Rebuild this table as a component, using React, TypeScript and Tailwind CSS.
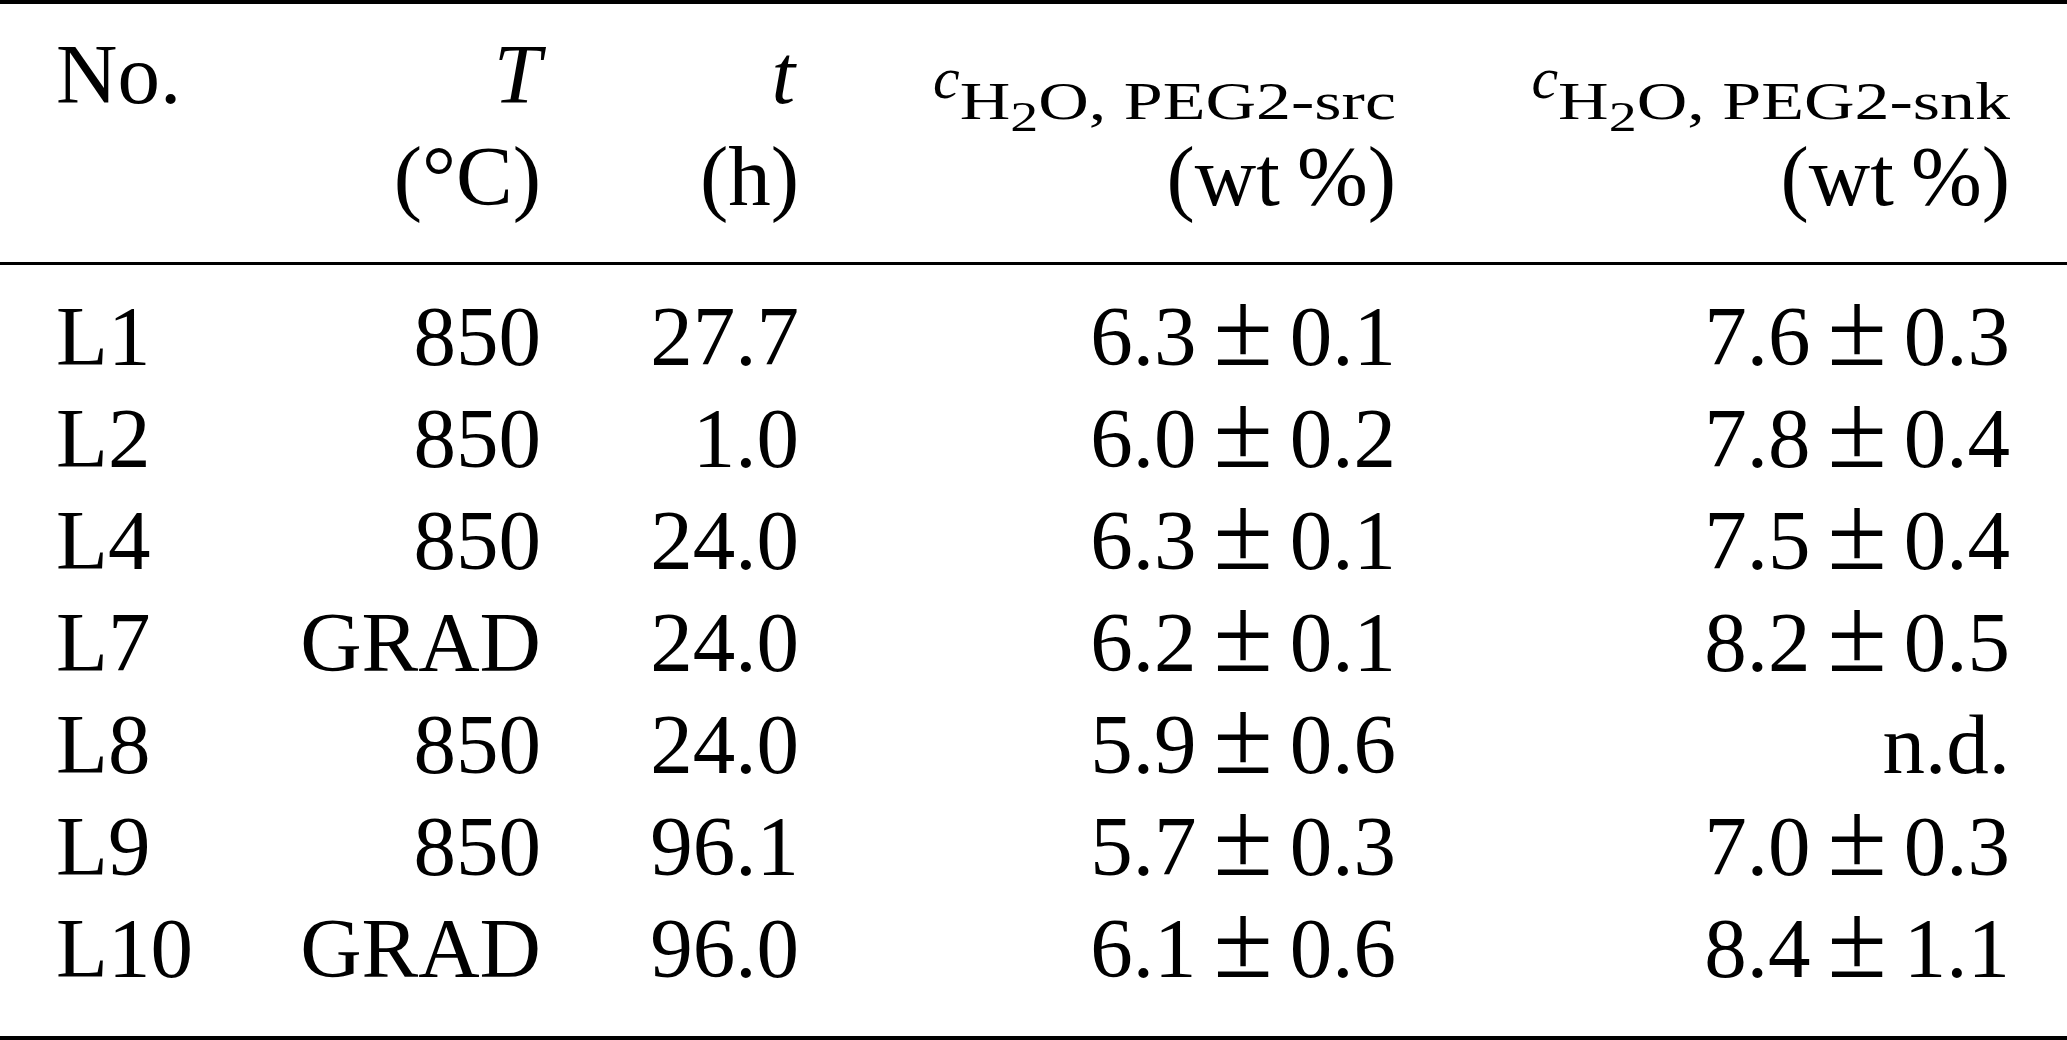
type Val = [string, string] | null;

const rows: { no: string; temp: string; time: string; src: Val; snk: Val }[] = [
  { no: 'L1', temp: '850', time: '27.7', src: ['6.3', '0.1'], snk: ['7.6', '0.3'] },
  { no: 'L2', temp: '850', time: '1.0', src: ['6.0', '0.2'], snk: ['7.8', '0.4'] },
  { no: 'L4', temp: '850', time: '24.0', src: ['6.3', '0.1'], snk: ['7.5', '0.4'] },
  { no: 'L7', temp: 'GRAD', time: '24.0', src: ['6.2', '0.1'], snk: ['8.2', '0.5'] },
  { no: 'L8', temp: '850', time: '24.0', src: ['5.9', '0.6'], snk: null },
  { no: 'L9', temp: '850', time: '96.1', src: ['5.7', '0.3'], snk: ['7.0', '0.3'] },
  { no: 'L10', temp: 'GRAD', time: '96.0', src: ['6.1', '0.6'], snk: ['8.4', '1.1'] },
];

const cols = 'grid grid-cols-[244px_241px_258px_597px_614px] pl-[56px]';

function PlusMinus({ v }: { v: Val }) {
  if (!v) return <>n.d.</>;
  return (
    <>
      {v[0]}
      <span className="mx-[17px] text-[108px] leading-[0]">±</span>
      {v[1]}
    </>
  );
}

function Conc({ label }: { label: string }) {
  return (
    <div className="flex flex-col items-end">
      <div className="whitespace-nowrap">
        <span className="relative -top-[5px] italic text-[60px] leading-none">c</span>
        <span className="relative top-[16px] inline-block text-[70px] leading-none scale-y-[0.75] origin-[50%_58.6px]">
          H<span className="text-[56px] leading-[0] align-[-16px]">2</span>O, {label}
        </span>
      </div>
      <div>(wt&thinsp;%)</div>
    </div>
  );
}

export default function App() {
  return (
    <div className="w-[2067px] h-[1040px] overflow-hidden bg-white text-black font-['Liberation_Serif','Times_New_Roman',serif] text-[85px] leading-[102px]">
      <div className={`${cols} border-t-4 border-b-[3px] border-black pt-[19px] pb-[35px]`}>
        <div>No.</div>
        <div className="flex flex-col items-end">
          <div className="italic">T</div>
          <div>(°C)</div>
        </div>
        <div className="flex flex-col items-end">
          <div className="italic pr-[4px]">t</div>
          <div>(h)</div>
        </div>
        <Conc label="PEG2-src" />
        <Conc label="PEG2-snk" />
      </div>

      <div className={`${cols} border-b-4 border-black pt-[20px] pb-[37px]`}>
        {rows.map((r) => (
          <div key={r.no} className="contents">
            <div>{r.no}</div>
            <div className="text-right">{r.temp}</div>
            <div className="text-right">{r.time}</div>
            <div className="text-right whitespace-nowrap">
              <PlusMinus v={r.src} />
            </div>
            <div className="text-right whitespace-nowrap">
              <PlusMinus v={r.snk} />
            </div>
          </div>
        ))}
      </div>
    </div>
  );
}
